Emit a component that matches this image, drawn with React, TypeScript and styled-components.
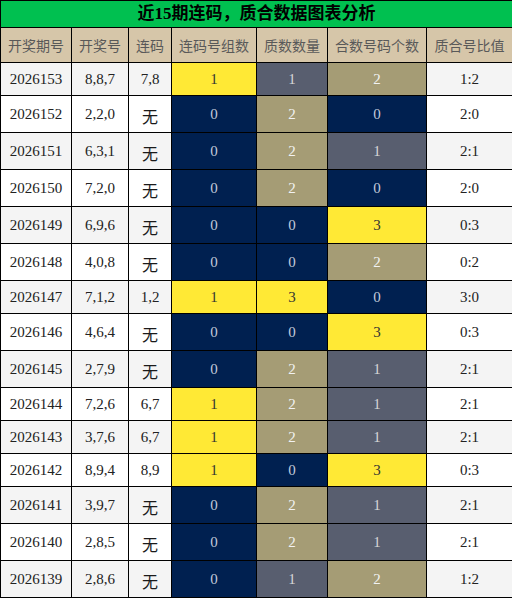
import React from 'react';
import styled, { createGlobalStyle } from 'styled-components';

type Tone = 'y' | 'n' | 's' | 't';

const GlobalStyle = createGlobalStyle`
  html, body { margin: 0; padding: 0; background: #fff; }
  body { font-family: "Liberation Serif", "Noto Sans CJK SC", serif; }
`;

const Table = styled.table`
  width: 512px;
  table-layout: fixed;
  border-collapse: collapse;
  border: 1px solid #000;
`;

const TitleCell = styled.th`
  height: 26px;
  padding: 0;
  background: #00c050;
  border: 1px solid #000;
  color: #000;
  font-family: "Liberation Serif", "Noto Sans CJK SC", serif;
  font-size: 17px;
  font-weight: bold;
  line-height: 20px;
`;

const HeadCell = styled.th`
  height: 34px;
  padding: 0;
  background: #d6c6a9;
  border: 1px solid #000;
  color: #595959;
  font-family: "Noto Sans CJK SC", sans-serif;
  font-size: 14px;
  font-weight: normal;
`;

const Row = styled.tr<{ $alt: boolean }>`
  background: ${p => (p.$alt ? '#f4f4f4' : '#fff')};
`;

const Cell = styled.td<{ $tall: boolean }>`
  height: ${p => (p.$tall ? 36 : 32)}px;
  padding: 0;
  border: 1px solid #000;
  text-align: center;
  color: #222;
  font-size: 15px;
`;

const tones: Record<Tone, { bg: string; fg: string }> = {
  y: { bg: '#ffe935', fg: '#333' },
  n: { bg: '#002050', fg: '#c3cbdb' },
  s: { bg: '#585e6f', fg: '#d6d6d6' },
  t: { bg: '#a59c75', fg: '#f2f2f2' },
};

const ToneCell = styled(Cell)<{ $tone: Tone }>`
  background: ${p => tones[p.$tone].bg};
  color: ${p => tones[p.$tone].fg};
`;

const None = styled.span`
  display: inline-block;
  padding-top: 3px;
  font-family: "Noto Sans CJK SC", sans-serif;
  font-size: 16px;
  color: #1a1a1a;
`;

const headers = ['开奖期号', '开奖号', '连码', '连码号组数', '质数数量', '合数号码个数', '质合号比值'];
const widths = [71, 57, 43, 85, 71, 99, 86];

type Draw = [string, string, string, string, string, string, string];

const rows: Draw[] = [
  ['2026153', '8,8,7', '7,8', '1y', '1s', '2t', '1:2'],
  ['2026152', '2,2,0', '', '0n', '2t', '0n', '2:0'],
  ['2026151', '6,3,1', '', '0n', '2t', '1s', '2:1'],
  ['2026150', '7,2,0', '', '0n', '2t', '0n', '2:0'],
  ['2026149', '6,9,6', '', '0n', '0n', '3y', '0:3'],
  ['2026148', '4,0,8', '', '0n', '0n', '2t', '0:2'],
  ['2026147', '7,1,2', '1,2', '1y', '3y', '0n', '3:0'],
  ['2026146', '4,6,4', '', '0n', '0n', '3y', '0:3'],
  ['2026145', '2,7,9', '', '0n', '2t', '1s', '2:1'],
  ['2026144', '7,2,6', '6,7', '1y', '2t', '1s', '2:1'],
  ['2026143', '3,7,6', '6,7', '1y', '2t', '1s', '2:1'],
  ['2026142', '8,9,4', '8,9', '1y', '0n', '3y', '0:3'],
  ['2026141', '3,9,7', '', '0n', '2t', '1s', '2:1'],
  ['2026140', '2,8,5', '', '0n', '2t', '1s', '2:1'],
  ['2026139', '2,8,6', '', '0n', '1s', '2t', '1:2'],
];

export default function App() {
  return (
    <>
      <GlobalStyle />
      <Table>
        <colgroup>
          {widths.map((w, i) => <col key={i} style={{ width: w }} />)}
        </colgroup>
        <thead>
          <tr>
            <TitleCell colSpan={7}>近15期连码，质合数据图表分析</TitleCell>
          </tr>
          <tr>
            {headers.map(h => <HeadCell key={h}>{h}</HeadCell>)}
          </tr>
        </thead>
        <tbody>
          {rows.map((r, i) => {
            const tall = r[2] === '';
            return (
              <Row key={r[0]} $alt={i % 2 === 0}>
                <Cell $tall={tall}>{r[0]}</Cell>
                <Cell $tall={tall}>{r[1]}</Cell>
                <Cell $tall={tall}>{tall ? <None>无</None> : r[2]}</Cell>
                {[r[3], r[4], r[5]].map((v, j) => (
                  <ToneCell key={j} $tall={tall} $tone={v[1] as Tone}>{v[0]}</ToneCell>
                ))}
                <Cell $tall={tall}>{r[6]}</Cell>
              </Row>
            );
          })}
        </tbody>
      </Table>
    </>
  );
}
